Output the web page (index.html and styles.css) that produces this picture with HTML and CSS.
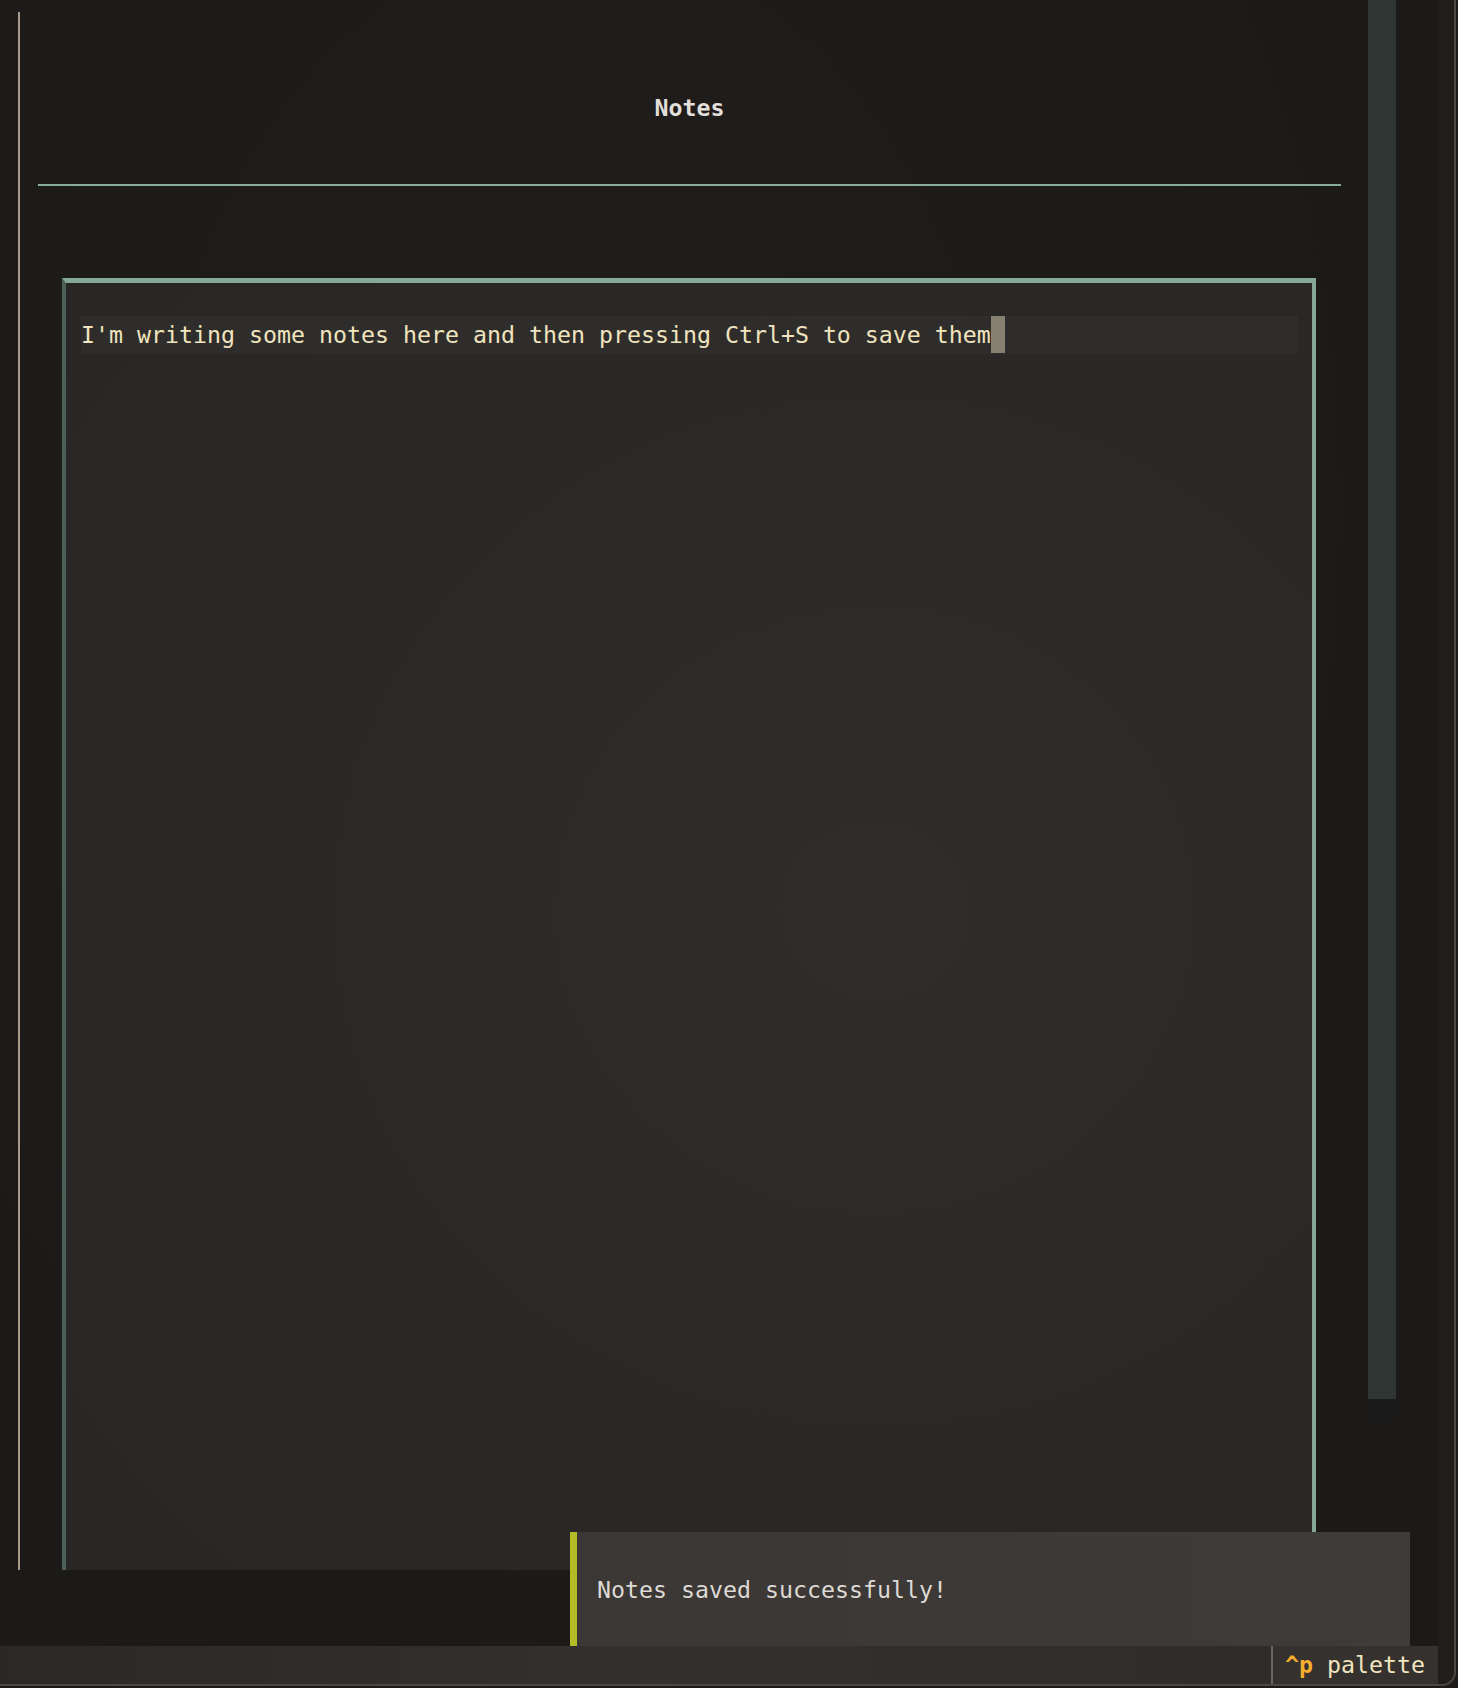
FILE: index.html
```html
<!DOCTYPE html>
<html>
<head>
<meta charset="utf-8">
<title>Notes</title>
<link rel="stylesheet" href="styles.css">
</head>
<body>
<div class="window">
  <div class="app">
    <div class="main">
      <div class="content">
        <div class="panel">
          <div class="header"><h1 class="title">Notes</h1></div>
          <div class="editor">
            <div class="line"><span class="text">I'm writing some notes here and then pressing Ctrl+S to save them</span><span class="cursor"></span></div>
          </div>
        </div>
      </div>
      <div class="scrollbar"><div class="thumb"></div></div>
      <div class="gutter"></div>
    </div>
    <div class="footer">
      <div class="spacer"></div>
      <div class="key"><span class="k">^p</span> palette</div>
    </div>
    <div class="toast">Notes saved successfully!</div>
  </div>
  <div class="edge"></div>
</div>
</body>
</html>
```
FILE: styles.css
```css
html, body {
  margin: 0;
  padding: 0;
  background: #1c1b1a;
}
body {
  font-family: "DejaVu Sans Mono", "Liberation Mono", monospace;
  font-size: 23.25px;
  width: 1458px;
  height: 1688px;
  overflow: hidden;
}
.window {
  width: 1456px;
  height: 1686px;
  box-sizing: border-box;
  display: flex;
  border-right: 2px solid #4a4846;
  border-bottom: 2px solid #4a4846;
  border-bottom-right-radius: 14px;
  overflow: hidden;
  background: #1e1d1c;
}
.app {
  width: 1438px;
  height: 100%;
  position: relative;
  display: flex;
  flex-direction: column;
  background: radial-gradient(ellipse at 40% 30%, #201d1b 0%, #1c1a18 70%);
}
.main {
  flex: 1;
  display: flex;
  align-items: flex-start;
  min-height: 0;
}
.content {
  width: 1368px;
  padding-top: 12px;
  box-sizing: border-box;
}
.panel {
  margin-left: 18px;
  border-left: 2px solid #a8998a;
  height: 1558px;
  overflow: hidden;
}
.header {
  margin: 0 27px 0 18px;
  height: 174px;
  box-sizing: border-box;
  border-bottom: 2px solid #8aab9d;
  text-align: center;
}
.title {
  margin: 0;
  padding-top: 77px;
  font-size: 23.25px;
  line-height: 38px;
  font-weight: bold;
  color: #e2dfda;
}
.editor {
  margin: 92px 52px 0 42px;
  height: 1400px;
  box-sizing: border-box;
  border-top: 5px solid #86a898;
  border-left: 4px solid #4c5f58;
  border-right: 4px solid #86a898;
  padding: 33px 14px 0 15px;
  background: radial-gradient(ellipse at 65% 45%, #2f2c29 0%, #2a2826 60%, #292726 100%);
}
.line {
  display: flex;
  height: 38px;
  line-height: 38px;
  background: #2f2d2b;
  color: #f0e4be;
  white-space: pre;
}
.cursor {
  width: 14px;
  height: 37px;
  background: #858070;
}
.scrollbar {
  width: 28px;
  height: 1418px;
  background: #1a1a1a;
}
.thumb {
  height: 1399px;
  background: #2f3533;
}
.gutter {
  flex: 1;
}
.footer {
  height: 38px;
  display: flex;
  background: linear-gradient(90deg, #2b2927 0%, #33302d 45%, #2e2b29 100%);
}
.spacer {
  flex: 1;
}
.key {
  border-left: 2px solid #6b655c;
  padding: 0 13px 0 12px;
  background: #35312e;
  color: #f0e4be;
  line-height: 38px;
  white-space: pre;
}
.k {
  color: #f4ad2f;
  font-weight: bold;
}
.toast {
  position: absolute;
  left: 570px;
  top: 1532px;
  width: 840px;
  height: 114px;
  box-sizing: border-box;
  border-left: 7px solid #b4bc25;
  background: linear-gradient(90deg, #3a3734 0%, #3e3b38 100%);
  padding-left: 20px;
  display: flex;
  align-items: center;
  color: #dddad5;
}
.edge {
  flex: 1;
  background: #1f1e1d;
}
```
